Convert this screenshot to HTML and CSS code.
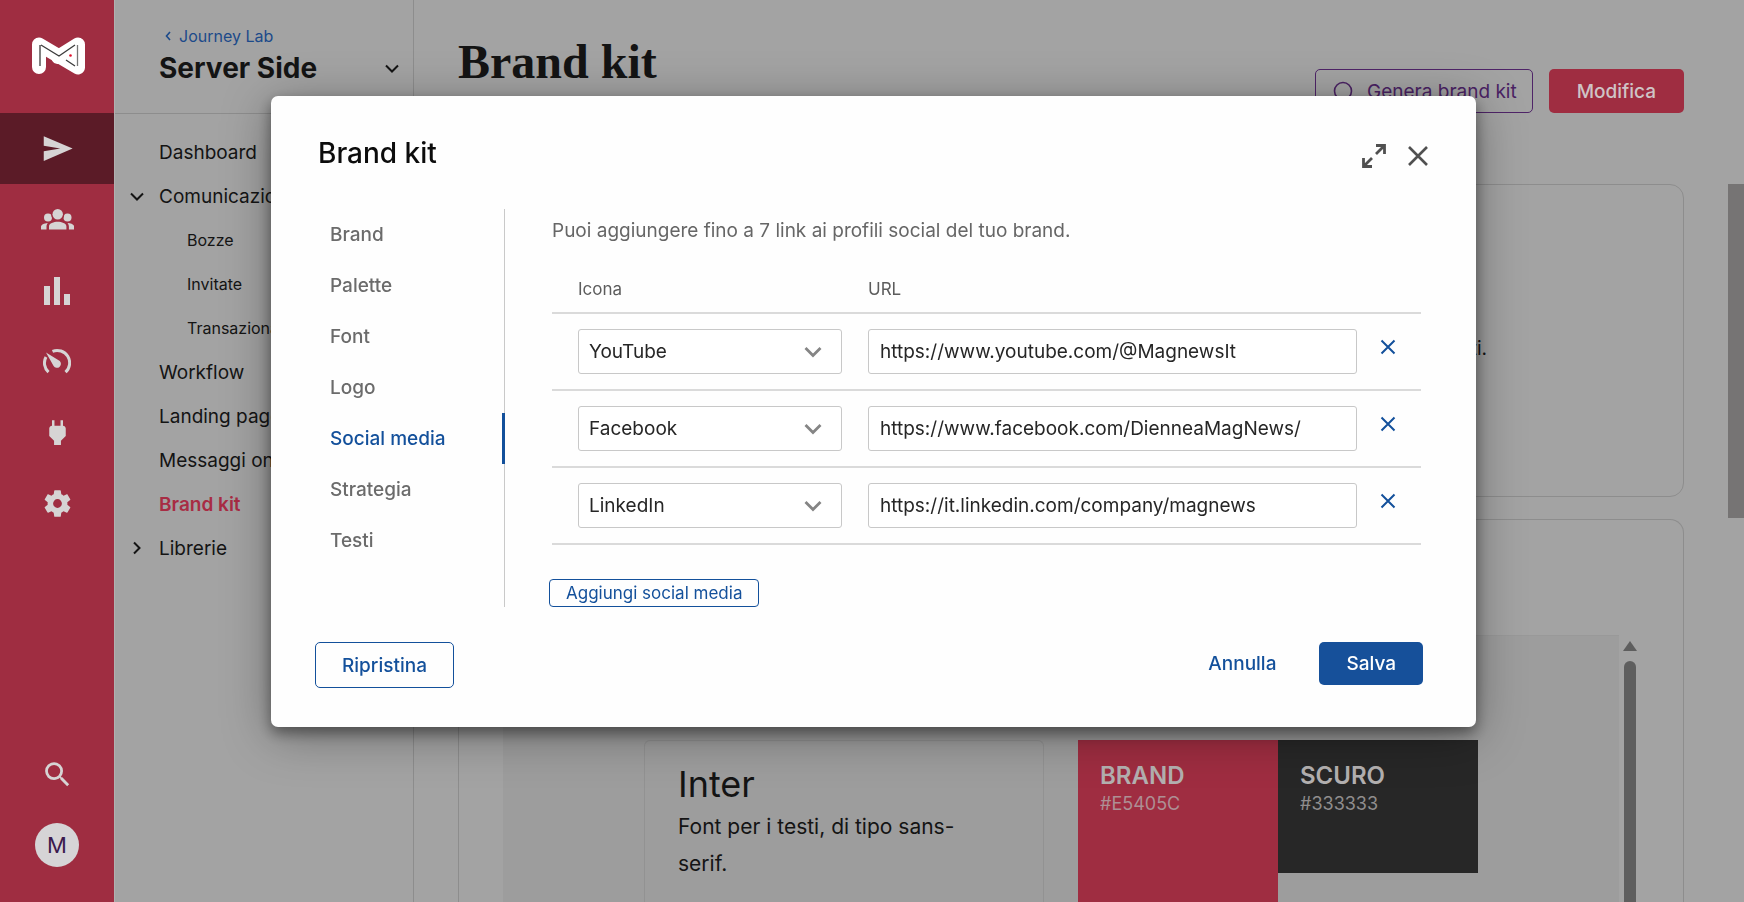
FILE: index.html
```html
<!DOCTYPE html>
<html lang="it">
<head>
<meta charset="utf-8">
<title>Brand kit</title>
<link rel="stylesheet" href="styles.css">
</head>
<body>
<div class="app">
  <nav class="rail" aria-label="Principale">
    <a class="rail-logo" href="#" aria-label="Home">
      <svg width="54" height="38" viewBox="0 0 54 38" fill="none">
        <path d="M7 30V7.500L46 30.500V7.500L26 20" stroke="#fff" stroke-width="14" stroke-linecap="round" stroke-linejoin="round"/>
        <path d="M8 29V8M9 8l18 11 16-11M34 23l9 6" stroke="#3c3c3c" stroke-width="1.300"/>
        <path d="M45.500 8v21" stroke="#777" stroke-width="1.300"/>
        <circle cx="38.500" cy="18.500" r="1.300" fill="#e0102c"/>
      </svg>
    </a>
    <a class="rail-item is-active" href="#" aria-label="Comunicazioni">
      <svg width="33" height="33" viewBox="0 0 24 24" fill="currentColor"><path d="M2 21l21-9L2 3v7l12 2-12 2z"/></svg>
    </a>
    <a class="rail-item" href="#" aria-label="Contatti">
      <svg width="33" height="21" viewBox="0 0 33 21" fill="currentColor"><circle cx="7" cy="8.500" r="4"/><circle cx="26.500" cy="8.500" r="4"/><circle cx="16.700" cy="5.500" r="6.600" fill="#9f2d41"/><circle cx="16.700" cy="5.300" r="5.200"/><path d="M8 20.500v-3.200c0-2.900 4.800-4.500 8.700-4.500s8.700 1.600 8.700 4.500v3.200zM0 20.500v-2.700c0-2.200 2.900-3.700 6.800-3.900-1.100 1.300-1.300 2.500-1.300 4.100v2.500zM33.300 20.500v-2.700c0-2.200-2.900-3.700-6.800-3.900 1.100 1.300 1.400 2.500 1.400 4.100v2.500z"/></svg>
    </a>
    <a class="rail-item" href="#" aria-label="Report">
      <svg width="26" height="28" viewBox="0 0 26 28" fill="currentColor"><path d="M0 9h6v19H0zM10 0h6v28h-6zM20 17h6v11h-6z"/></svg>
    </a>
    <a class="rail-item" href="#" aria-label="Prestazioni">
      <svg width="28" height="28" viewBox="0 0 28 28" fill="none" stroke="currentColor" stroke-width="3"><path d="M5.500 24.200A12.500 12.500 0 0 1 3 9M9.500 3.300A12.500 12.500 0 0 1 22.500 24.200"/><path d="M3 4.500L16.800 13A4 4 0 1 1 10.600 18z" fill="currentColor" stroke="none"/></svg>
    </a>
    <a class="rail-item" href="#" aria-label="Integrazioni">
      <svg width="33" height="33" viewBox="0 0 24 24" fill="currentColor"><path d="M16 7V3h-1.800v4H9.800V3H8v4C7 7 6 8 6 9v5.500L9.500 18v3h5v-3l3.500-3.500V9c0-1-1-2-2-2z"/></svg>
    </a>
    <a class="rail-item" href="#" aria-label="Impostazioni">
      <svg width="33" height="33" viewBox="0 0 24 24" fill="currentColor"><path d="M19.140 12.940c.04-.3.060-.61.060-.94 0-.32-.02-.64-.07-.94l2.030-1.580c.18-.14.230-.41.120-.61l-1.920-3.320c-.12-.22-.37-.29-.59-.22l-2.390.96c-.5-.38-1.030-.7-1.620-.94L14.400 2.810c-.04-.24-.24-.41-.48-.41h-3.840c-.24 0-.43.170-.47.410L9.250 5.350c-.59.240-1.130.570-1.620.94L5.240 5.330c-.22-.08-.47 0-.59.220L2.740 8.870c-.12.210-.08.470.120.610l2.030 1.580c-.05.300-.09.630-.09.940s.02.640.07.940l-2.030 1.580c-.18.140-.23.410-.12.610l1.920 3.320c.12.220.37.290.59.220l2.390-.96c.5.380 1.030.7 1.620.94l.36 2.540c.05.240.24.410.48.410h3.840c.24 0 .44-.17.470-.41l.36-2.540c.59-.24 1.130-.56 1.620-.94l2.390.96c.22.080.47 0 .59-.22l1.920-3.320c.12-.22.070-.47-.12-.61zM12 15.200A3.200 3.200 0 1 1 12 8.800a3.200 3.200 0 0 1 0 6.400z"/></svg>
    </a>
    <div class="rail-bottom">
      <button class="rail-button" type="button" aria-label="Cerca">
        <svg width="33" height="33" viewBox="0 0 24 24" fill="currentColor"><path d="M15.500 14h-.79l-.28-.27A6.470 6.470 0 0 0 16 9.500 6.500 6.500 0 1 0 9.500 16c1.610 0 3.090-.59 4.230-1.570l.27.280v.79l5 4.990L20.490 19zm-6 0a4.500 4.500 0 1 1 0-9 4.500 4.500 0 0 1 0 9z"/></svg>
      </button>
      <button class="avatar" type="button">M</button>
    </div>
  </nav>

  <aside class="sidebar">
    <header class="sidebar-head">
      <a class="back" href="#"><svg width="6" height="10" viewBox="0 0 6 10" fill="none" stroke="currentColor" stroke-width="1.600"><path d="M5 1L1.500 5 5 9"/></svg>Journey Lab</a>
      <button class="switcher" type="button">Server Side
        <svg width="14" height="9" viewBox="0 0 14 9" fill="none" stroke="currentColor" stroke-width="2"><path d="M1 1.500l6 6 6-6"/></svg>
      </button>
    </header>
    <ul class="tree">
      <li><a href="#">Dashboard</a></li>
      <li><a href="#"><svg class="twist" width="14" height="9" viewBox="0 0 14 9" fill="none" stroke="currentColor" stroke-width="2"><path d="M1 1.500l6 6 6-6"/></svg>Comunicazioni</a>
        <ul class="subtree">
          <li><a href="#">Bozze</a></li>
          <li><a href="#">Invitate</a></li>
          <li><a href="#">Transazionali</a></li>
        </ul>
      </li>
      <li><a href="#">Workflow</a></li>
      <li><a href="#">Landing page</a></li>
      <li><a href="#">Messaggi on site</a></li>
      <li><a class="is-current" href="#" aria-current="page">Brand kit</a></li>
      <li><a href="#"><svg class="twist" width="14" height="14" viewBox="0 0 14 14" fill="none" stroke="currentColor" stroke-width="2"><path d="M4 1.500L9.500 7 4 12.500"/></svg>Librerie</a></li>
    </ul>
  </aside>

  <main class="main">
    <header class="page-head">
      <h1>Brand kit</h1>
      <div class="page-actions">
        <button class="btn-generate" type="button"><svg width="20" height="24" viewBox="0 0 20 24" fill="none" stroke="currentColor" stroke-width="1.600"><circle cx="10" cy="12" r="8.500"/></svg>Genera brand kit</button>
        <button class="btn-edit" type="button">Modifica</button>
      </div>
    </header>
    <section class="card card-intro"><p>testi.</p></section>
    <section class="card card-preview">
      <div class="preview">
        <article class="font-card">
          <h2>Inter</h2>
          <p>Font per i testi, di tipo sans-serif.</p>
        </article>
        <div class="swatches">
          <div class="swatch swatch-brand"><strong>BRAND</strong><span>#E5405C</span></div>
          <div class="swatch swatch-dark"><strong>SCURO</strong><span>#333333</span></div>
        </div>
      </div>
      <div class="preview-scroll"><i class="scroll-arrow"></i><i class="scroll-thumb"></i></div>
    </section>
  </main>
  <div class="page-scroll"></div>
</div>

<div class="overlay">
  <form class="modal" role="dialog" aria-labelledby="modal-title">
    <header class="modal-head">
      <h2 id="modal-title">Brand kit</h2>
      <div class="modal-tools">
        <button type="button" aria-label="Espandi"><svg width="26" height="26" viewBox="0 0 26 26" fill="none" stroke="currentColor" stroke-width="2.800"><path d="M15 2.500h8.500V11M23.500 2.500L15 11M11 23.500H2.500V15M2.500 23.500L11 15"/></svg></button>
        <button type="button" aria-label="Chiudi"><svg width="22" height="22" viewBox="0 0 22 22" fill="none" stroke="currentColor" stroke-width="2.600"><path d="M2 2l18 18M20 2L2 20"/></svg></button>
      </div>
    </header>
    <div class="modal-body">
      <nav class="tabs" aria-label="Sezioni">
        <a href="#">Brand</a>
        <a href="#">Palette</a>
        <a href="#">Font</a>
        <a href="#">Logo</a>
        <a class="is-active" href="#" aria-current="true">Social media</a>
        <a href="#">Strategia</a>
        <a href="#">Testi</a>
      </nav>
      <div class="panel">
        <p class="hint">Puoi aggiungere fino a 7 link ai profili social del tuo brand.</p>
        <table class="links">
          <thead><tr><th class="col-icon" id="h-icon">Icona</th><th id="h-url">URL</th><td class="col-del"></td></tr></thead>
          <tbody>
            <tr>
              <td><div class="select"><select aria-labelledby="h-icon"><option>YouTube</option></select><svg width="18" height="12" viewBox="0 0 18 12" fill="none" stroke="currentColor" stroke-width="2.800"><path d="M1.500 2L9 9.500 16.500 2"/></svg></div></td>
              <td><input type="text" aria-labelledby="h-url" value="https://www.youtube.com/@MagnewsIt"></td>
              <td class="del"><button type="button" aria-label="Rimuovi YouTube"><svg width="16" height="16" viewBox="0 0 16 16" fill="none" stroke="currentColor" stroke-width="2"><path d="M1.500 1.500l13 13M14.500 1.500l-13 13"/></svg></button></td>
            </tr>
            <tr>
              <td><div class="select"><select aria-labelledby="h-icon"><option>Facebook</option></select><svg width="18" height="12" viewBox="0 0 18 12" fill="none" stroke="currentColor" stroke-width="2.800"><path d="M1.500 2L9 9.500 16.500 2"/></svg></div></td>
              <td><input type="text" aria-labelledby="h-url" value="https://www.facebook.com/DienneaMagNews/"></td>
              <td class="del"><button type="button" aria-label="Rimuovi Facebook"><svg width="16" height="16" viewBox="0 0 16 16" fill="none" stroke="currentColor" stroke-width="2"><path d="M1.500 1.500l13 13M14.500 1.500l-13 13"/></svg></button></td>
            </tr>
            <tr>
              <td><div class="select"><select aria-labelledby="h-icon"><option>LinkedIn</option></select><svg width="18" height="12" viewBox="0 0 18 12" fill="none" stroke="currentColor" stroke-width="2.800"><path d="M1.500 2L9 9.500 16.500 2"/></svg></div></td>
              <td><input type="text" aria-labelledby="h-url" value="https://it.linkedin.com/company/magnews"></td>
              <td class="del"><button type="button" aria-label="Rimuovi LinkedIn"><svg width="16" height="16" viewBox="0 0 16 16" fill="none" stroke="currentColor" stroke-width="2"><path d="M1.500 1.500l13 13M14.500 1.500l-13 13"/></svg></button></td>
            </tr>
          </tbody>
        </table>
        <button class="btn-add" type="button">Aggiungi social media</button>
      </div>
    </div>
    <footer class="modal-foot">
      <button class="btn-reset" type="reset">Ripristina</button>
      <button class="btn-cancel" type="button">Annulla</button>
      <button class="btn-save" type="submit">Salva</button>
    </footer>
  </form>
</div>
</body>
</html>
```
FILE: styles.css
```css
*, *::before, *::after { box-sizing: border-box; }

body {
  margin: 0;
  background: #a3a3a3;
  color: #141414;
  font-family: Inter, "Liberation Sans", sans-serif;
  font-size: 19px;
}

h1, h2, p, ul { margin: 0; padding: 0; }
ul { list-style: none; }
a { color: inherit; text-decoration: none; }
button { padding: 0; border: 0; background: none; color: inherit; font: inherit; cursor: pointer; }
svg { display: block; flex: none; }

.app {
  display: grid;
  grid-template-columns: 114px 300px 1fr 16px;
  grid-template-rows: 100vh;
}

/* Icon rail */
.rail {
  display: flex;
  flex-direction: column;
  background: #9f2d41;
  color: #d6d4d4;
}
.rail-logo {
  display: flex;
  justify-content: center;
  height: 113px;
  padding: 37px 0 0 4px;
}
.rail-item {
  display: flex;
  align-items: center;
  justify-content: center;
  height: 71px;
}
.rail-item.is-active { background: #5b1b27; }
.rail-bottom {
  display: flex;
  flex-direction: column;
  align-items: center;
  gap: 32px;
  margin-top: auto;
  padding-bottom: 35px;
}
.avatar {
  width: 44px;
  height: 44px;
  border-radius: 50%;
  background: #d6d4d6;
  color: #3b1a4d;
  font-size: 22px;
}

/* Sidebar */
.sidebar {
  border-left: 1px solid #b0b0b0;
  border-right: 1px solid #8d8d8d;
}
.sidebar-head {
  height: 114px;
  padding: 24px 14px 0 44px;
  border-bottom: 1px solid #8d8d8d;
}
.back {
  display: flex;
  align-items: center;
  gap: 8px;
  padding-left: 6px;
  color: #1c4a8a;
  font-size: 16px;
  line-height: 24px;
}
.switcher {
  display: flex;
  align-items: center;
  justify-content: space-between;
  width: 100%;
  font-size: 28px;
  font-weight: 700;
  line-height: 40px;
}
.tree { padding-top: 16px; }
.tree a {
  display: flex;
  align-items: center;
  height: 44px;
  padding-left: 44px;
  white-space: nowrap;
}
.twist { margin-left: -29px; margin-right: 15px; }
.tree .subtree a { padding-left: 72px; font-size: 16px; }
.tree .is-current { color: #a82c44; font-weight: 600; }

/* Page */
.main {
  display: flex;
  flex-direction: column;
  min-width: 0;
  padding: 0 44px;
}
.page-head {
  display: flex;
  justify-content: space-between;
  height: 184px;
}
.page-head h1 {
  padding-top: 34px;
  font-family: "Liberation Serif", serif;
  font-size: 48px;
  font-weight: 700;
  line-height: 56px;
}
.page-actions {
  display: flex;
  align-items: flex-start;
  gap: 16px;
  padding-top: 69px;
}
.btn-generate, .btn-edit { height: 44px; border-radius: 5px; }
.btn-generate {
  display: flex;
  align-items: center;
  gap: 14px;
  padding: 0 15px 0 17px;
  border: 1px solid #4f2468;
  color: #4a2263;
}
.btn-edit {
  padding: 0 28px;
  background: #9f2d41;
  color: #cfc4c6;
  font-weight: 500;
}
.card { border: 1px solid #8d8d8d; border-radius: 14px; }
.card-intro {
  flex: none;
  height: 313px;
  margin-bottom: 22px;
  padding: 152px 196px 0 0;
  text-align: right;
}
.card-preview {
  display: flex;
  flex: 1;
  gap: 4px;
  padding: 115px 46px 0 44px;
  border-bottom: 0;
  border-radius: 14px 14px 0 0;
}
.preview {
  display: flex;
  flex: 1;
  gap: 34px;
  padding: 104px 141px 0 141px;
  border-top: 1px solid #999;
  background: #9d9d9d;
}
.font-card {
  flex: 1;
  padding: 20px 48px 0 33px;
  border: 1px solid #929292;
  border-bottom: 0;
  border-radius: 6px 6px 0 0;
}
.font-card h2 { font-size: 36px; font-weight: 400; line-height: 46px; }
.font-card p { padding-top: 1px; font-size: 21px; line-height: 37px; }
.swatches { display: flex; }
.swatch {
  display: flex;
  flex-direction: column;
  width: 200px;
  padding: 22px 22px 0;
  color: #b3b0b0;
}
.swatch strong { font-size: 24px; font-weight: 600; line-height: 28px; }
.swatch span { font-size: 18px; line-height: 28px; opacity: .75; }
.swatch-brand { background: #9f2d41; }
.swatch-dark { height: 133px; background: #272727; }
.preview-scroll {
  display: flex;
  flex-direction: column;
  align-items: center;
  gap: 10px;
  width: 14px;
  padding-top: 6px;
}
.scroll-arrow {
  border: 7px solid transparent;
  border-top: 0;
  border-bottom: 10px solid #5e5e5e;
}
.scroll-thumb {
  flex: 1;
  width: 12px;
  border-radius: 6px 6px 0 0;
  background: #5e5e5e;
}
.page-scroll { height: 334px; margin-top: 184px; background: #767474; }

/* Modal */
.overlay {
  position: fixed;
  inset: 0;
  padding: 96px 268px 0 271px;
}
.modal {
  padding: 32px 53px 39px 44px;
  border-radius: 7px;
  background: #fefefe;
  box-shadow: 0 6px 14px rgba(0, 0, 0, .4), 0 8px 48px rgba(0, 0, 0, .35);
}
.modal-head {
  display: flex;
  justify-content: space-between;
  height: 81px;
  padding-left: 3px;
}
.modal-head h2 {
  color: #0c0c0c;
  font-size: 28px;
  font-weight: 500;
  line-height: 50px;
}
.modal-tools {
  display: flex;
  align-items: center;
  gap: 20px;
  height: 56px;
  margin-right: -6px;
  color: #505050;
}
.modal-body { display: flex; }
.tabs {
  display: flex;
  flex-direction: column;
  width: 190px;
  height: 398px;
  border-right: 1px solid #c9c9c9;
}
.tabs a {
  display: flex;
  align-items: center;
  height: 51px;
  margin-right: -1px;
  padding-left: 15px;
  color: #6b6b6b;
  font-weight: 500;
}
.tabs .is-active { border-right: 3px solid #13509b; color: #13509b; }
.panel { flex: 1; padding: 0 2px 0 47px; }
.hint { padding-top: 10px; color: #666; line-height: 24px; }
.links {
  width: 100%;
  margin-top: 22px;
  border-collapse: collapse;
  table-layout: fixed;
}
.links tr { border-bottom: 2px solid #dadada; }
.links th, .links td { padding: 0; }
.links th {
  height: 48px;
  padding-left: 26px;
  color: #5c5c5c;
  font-size: 17px;
  font-weight: 400;
  text-align: left;
}
.col-icon { width: 290px; }
.col-del { width: 64px; }
.links tbody td { height: 77px; padding-left: 26px; }
.links tbody .del { padding: 0 0 6px 23px; }
.links .del button { color: #13509b; }
.select { position: relative; }
.select svg {
  position: absolute;
  top: 17px;
  right: 20px;
  color: #858585;
  pointer-events: none;
}
.select select, .links input {
  display: block;
  width: 100%;
  height: 45px;
  padding: 0 11px;
  border: 1px solid #c8c8c8;
  border-radius: 3px;
  background: #fff;
  color: #262626;
  font: inherit;
  appearance: none;
}
.select select { padding: 0 10px; }
.btn-add {
  height: 28px;
  margin: 34px 0 0 -3px;
  padding: 0 16px;
  border: 1px solid #13509b;
  border-radius: 4px;
  color: #13509b;
  font-size: 17px;
  line-height: 24px;
}
.modal-foot {
  display: flex;
  align-items: flex-start;
  padding-top: 35px;
  color: #13509b;
  font-weight: 500;
}
.btn-reset {
  height: 46px;
  margin-right: auto;
  padding: 0 26px;
  border: 1px solid #13509b;
  border-radius: 5px;
}
.btn-cancel { height: 43px; margin-right: 43px; }
.btn-save {
  height: 43px;
  padding: 0 27px;
  border-radius: 5px;
  background: #16509a;
  color: #fff;
}
```
